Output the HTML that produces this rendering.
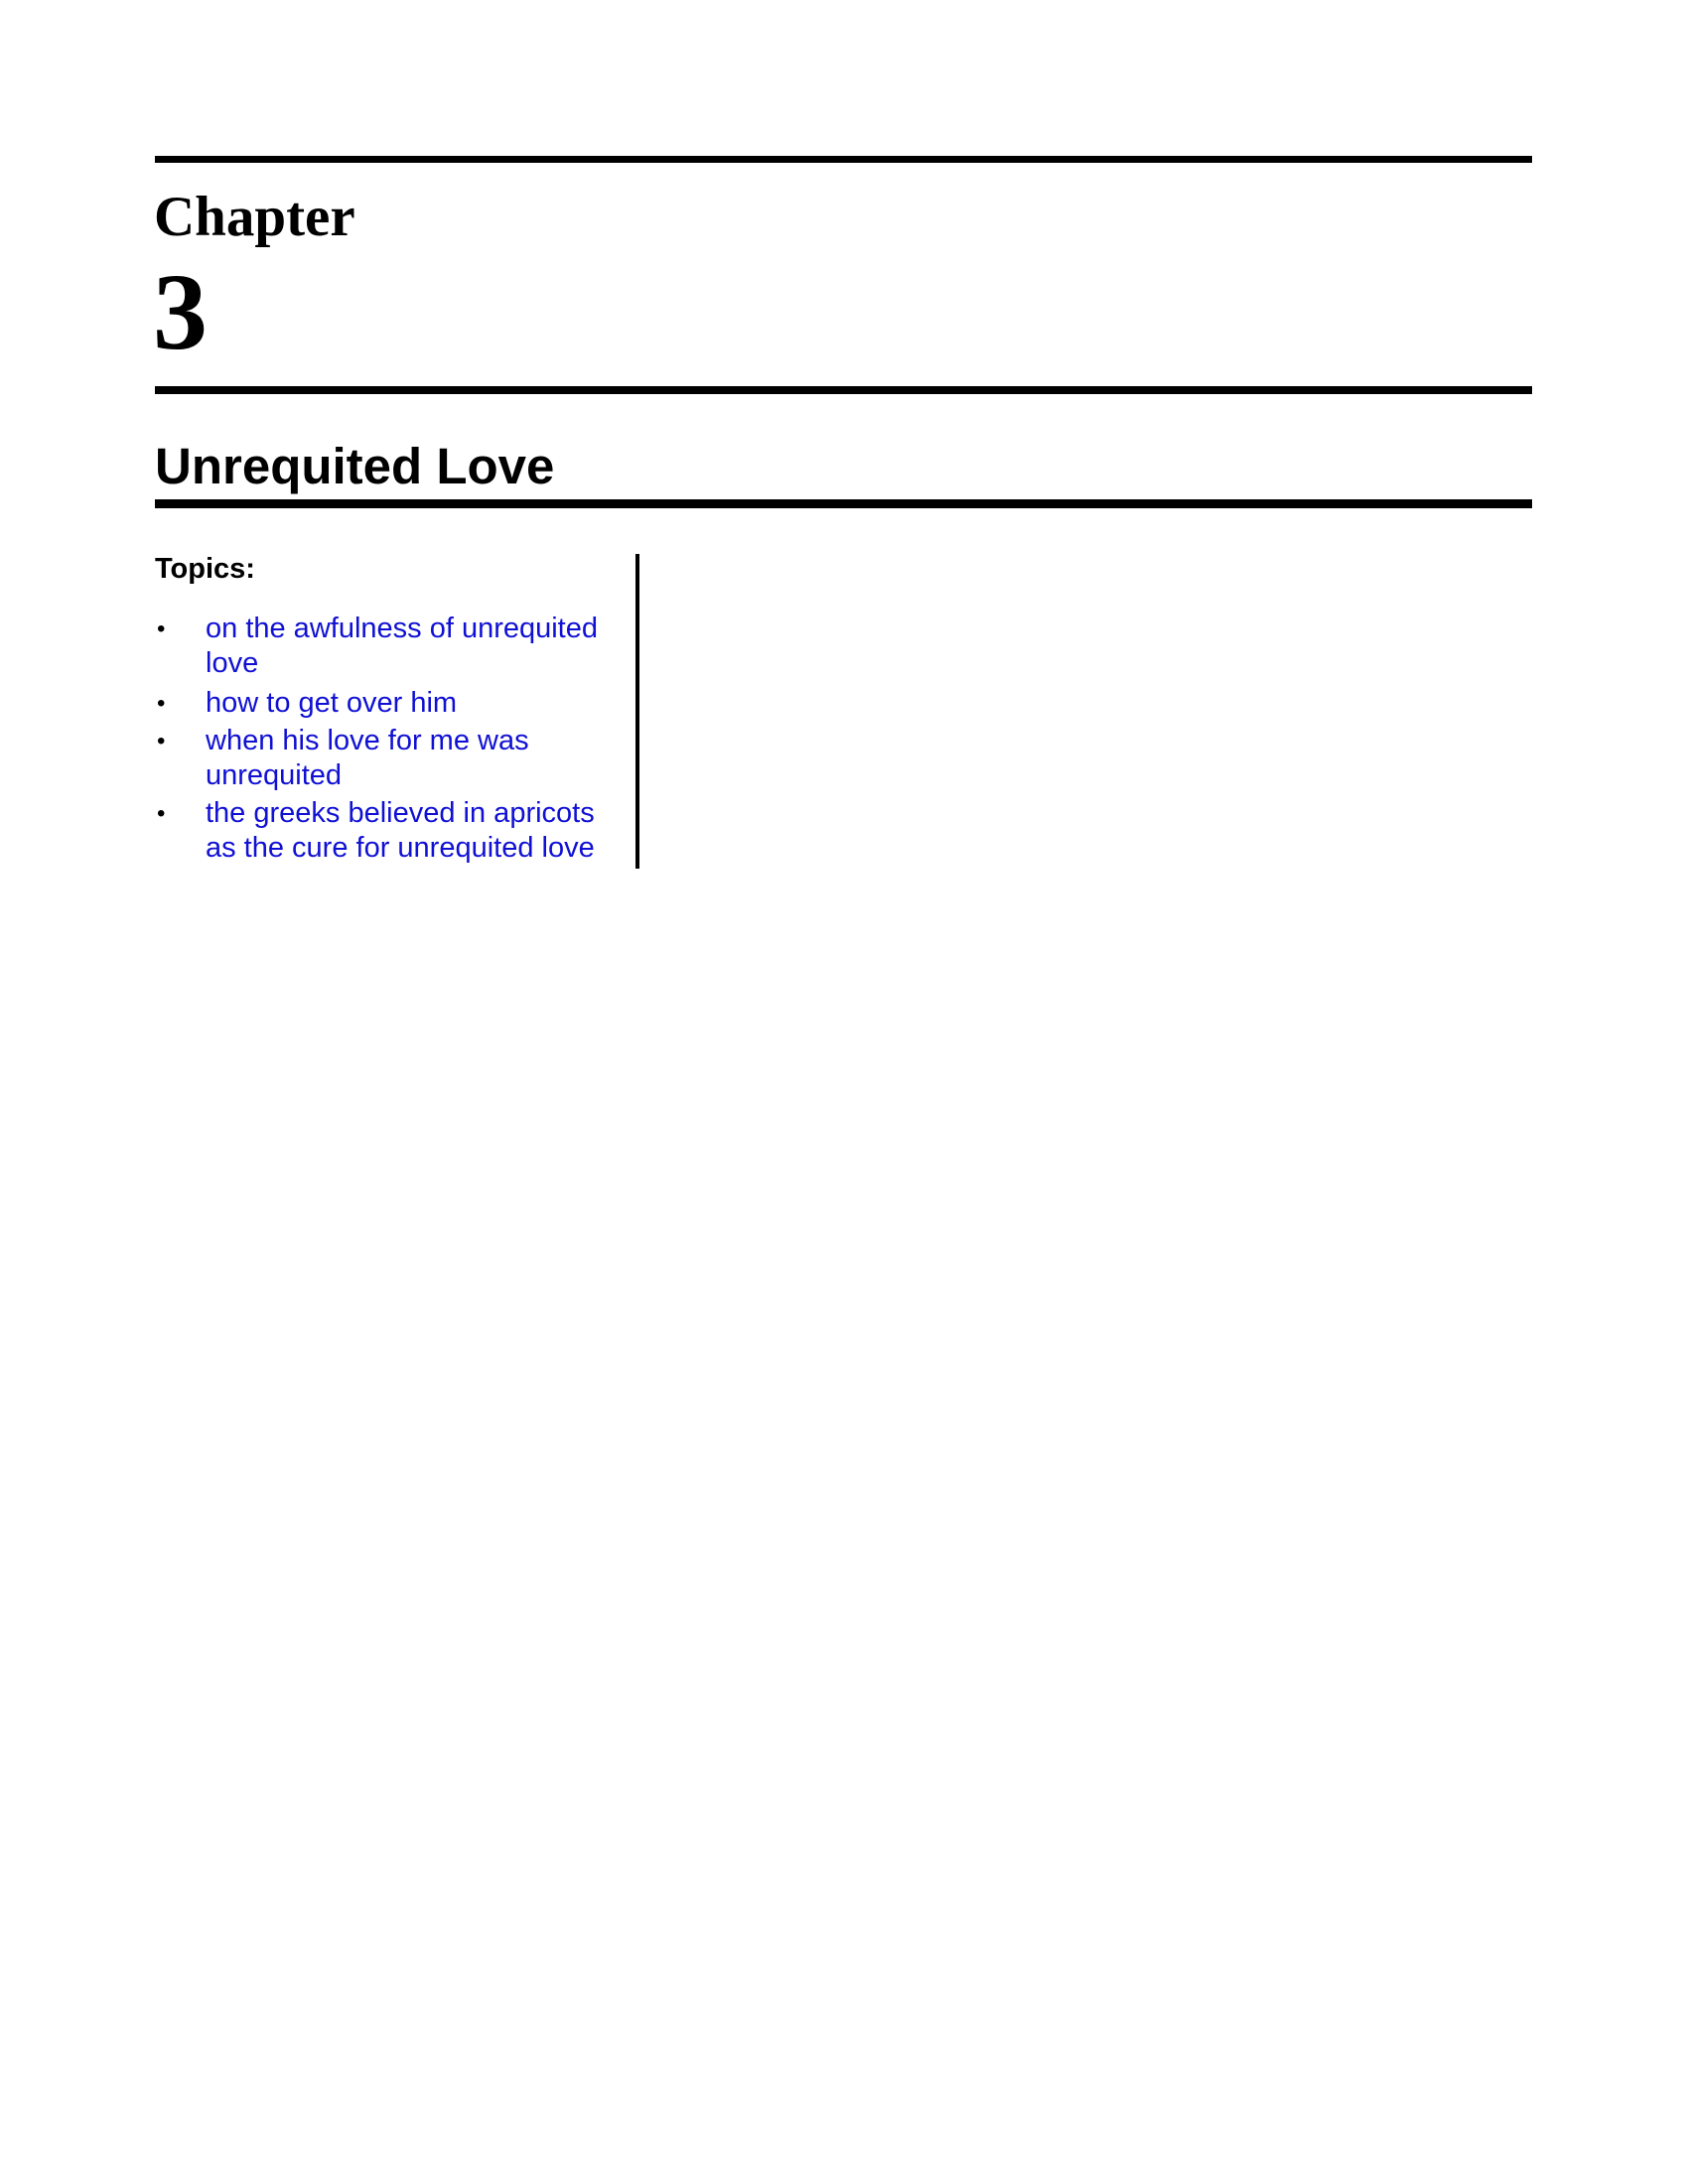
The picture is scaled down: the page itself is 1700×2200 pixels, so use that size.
<!DOCTYPE html>
<html><head><meta charset="utf-8"><style>
html,body{margin:0;padding:0;background:#fff;}
body{width:1700px;height:2200px;position:relative;overflow:hidden;}
.r{position:absolute;left:156px;width:1387px;background:#000;}
.t{position:absolute;white-space:nowrap;}
.li{position:absolute;left:207px;font:29px/30px "Liberation Sans",sans-serif;color:#1010d4;white-space:nowrap;}
.b{position:absolute;left:158px;font:24px/30px "Liberation Sans",sans-serif;color:#000;}
</style></head><body>
<div class="r" style="top:157px;height:7px"></div>
<div class="t" style="left:155px;top:190px;font:bold 57px/57px 'Liberation Serif',serif;">Chapter</div>
<div class="t" style="left:154px;top:260px;font:bold 110px/108px 'Liberation Serif',serif;">3</div>
<div class="r" style="top:389px;height:8px"></div>
<div class="t" style="left:156px;top:444px;font:bold 51px/51px 'Liberation Sans',sans-serif;">Unrequited Love</div>
<div class="r" style="top:503px;height:9px"></div>
<div class="t" style="left:156px;top:559px;font:bold 29px/29px 'Liberation Sans',sans-serif;">Topics:</div>
<div style="position:absolute;left:640px;top:558px;width:4px;height:317px;background:#000"></div>
<div class="b" style="top:619px">•</div>
<div class="li" style="top:618px">on the awfulness of unrequited</div>
<div class="li" style="top:653px">love</div>
<div class="b" style="top:694px">•</div>
<div class="li" style="top:693px">how to get over him</div>
<div class="b" style="top:732px">•</div>
<div class="li" style="top:731px">when his love for me was</div>
<div class="li" style="top:766px">unrequited</div>
<div class="b" style="top:805px">•</div>
<div class="li" style="top:804px">the greeks believed in apricots</div>
<div class="li" style="top:839px">as the cure for unrequited love</div>
</body></html>
